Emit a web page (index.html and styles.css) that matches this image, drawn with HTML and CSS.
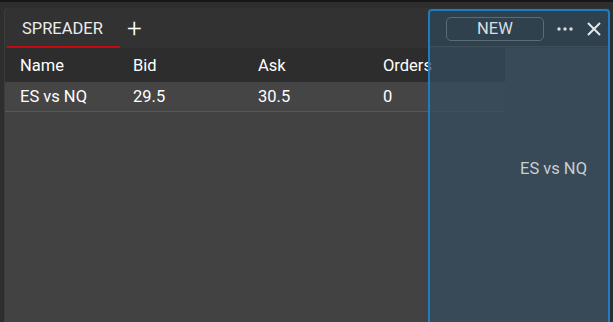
FILE: index.html
```html
<!DOCTYPE html>
<html lang="en">
<head>
    <meta charset="UTF-8">
    <meta name="viewport" content="width=device-width, initial-scale=1.0">
    <title>Spreader</title>
    <link rel="stylesheet" href="styles.css">
</head>
<body>
    <div class="panel">
        <div class="tabs">
            <div class="tab">SPREADER</div>
            <div class="add">+</div>
        </div>
        <div class="table">
            <div class="row head">
                <div class="cell c1">Name</div>
                <div class="cell c2">Bid</div>
                <div class="cell c3">Ask</div>
                <div class="cell c4">Orders</div>
            </div>
            <div class="row data">
                <div class="cell c1">ES vs NQ</div>
                <div class="cell c2">29.5</div>
                <div class="cell c3">30.5</div>
                <div class="cell c4">0</div>
            </div>
        </div>

        <div class="detail">
            <div class="detail-head">
                <button class="new">NEW</button>
                <span class="more">
                    <svg width="16" height="4" viewBox="0 0 16 4"><circle cx="2" cy="2" r="1.7" fill="#d8dde1"/><circle cx="8" cy="2" r="1.7" fill="#d8dde1"/><circle cx="14" cy="2" r="1.7" fill="#d8dde1"/></svg>
                </span>
                <span class="close">
                    <svg width="14" height="14" viewBox="0 0 14 14"><path d="M1 1L13 13M13 1L1 13" stroke="#e4e7ea" stroke-width="2"/></svg>
                </span>
            </div>
            <div class="detail-body">ES vs NQ</div>
        </div>
    </div>
</body>
</html>
```

FILE: styles.css
```css
body{
    margin: 0;
    height: 100vh;
    background: #2e2e2e;
    border-top: 2px solid #161616;
    box-sizing: border-box;
    font-family: Roboto, "Liberation Sans", sans-serif;
    font-size: 16.5px;
    overflow: hidden;
}
.panel{
    position: relative;
    margin: 6px 3px 0 4px;
    height: calc(100vh - 8px);
    background: #424242;
    border-left: 1px solid #3c3c3c;
    border-top-left-radius: 4px;
}
.tabs{
    display: flex;
    align-items: stretch;
    height: 40px;
    background: #323232;
    border-top-left-radius: 4px;
}
.tab{
    margin-left: 2px;
    width: 98px;
    padding: 2px 0 0 15px;
    display: flex;
    align-items: center;
    color: #ececec;
    border-bottom: 2px solid #c8090f;
}
.add{
    margin-left: 7px;
    display: flex;
    align-items: center;
    padding-bottom: 1px;
    color: #fff;
    font-size: 26px;
    font-weight: 300;
}
.table{
    width: 500px;
}
.row{
    display: flex;
    color: #fff;
}
.head{
    height: 34px;
    background: #2d2d2d;
    align-items: center;
}
.data{
    height: 29px;
    background: #454545;
    border-bottom: 1px solid #585858;
    align-items: center;
}
.cell{
    padding-left: 15px;
    box-sizing: border-box;
}
.c1{ width: 113px; }
.c2{ width: 125px; }
.c3{ width: 125px; }
.c4{ flex: 1; }

.detail{
    position: absolute;
    left: 423px;
    top: 1px;
    right: 0;
    bottom: 0;
    border: 2px solid #1c7dc6;
    border-bottom: 0;
    border-radius: 4px 4px 0 0;
    background: rgba(52, 78, 96, 0.72);
}
.detail-head{
    height: 35px;
    display: flex;
    align-items: center;
    background: rgba(20, 30, 40, 0.12);
    border-bottom: 1px solid rgba(255, 255, 255, 0.08);
}
.new{
    margin-left: 16px;
    width: 98px;
    height: 24px;
    background: transparent;
    border: 1px solid #5c6c77;
    border-radius: 5px;
    color: #d8dee2;
    font-family: inherit;
    font-size: 16.5px;
    padding: 0;
}
.more{
    margin-left: 13px;
    display: flex;
    align-items: center;
}
.close{
    margin-left: 14px;
    display: flex;
    align-items: center;
}
.detail-body{
    padding: 112px 21px 0 0;
    text-align: right;
    color: #c9ced2;
}
```
